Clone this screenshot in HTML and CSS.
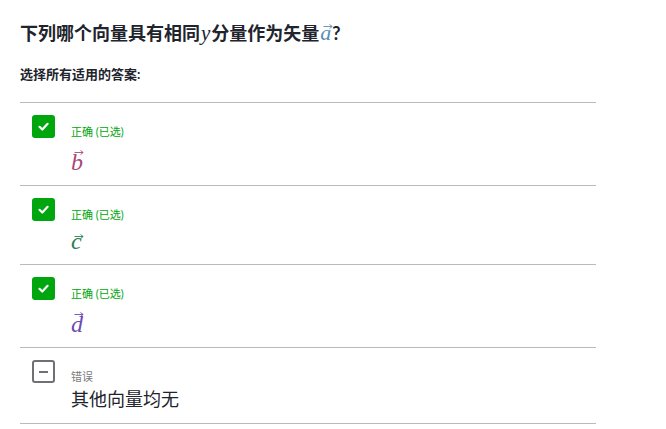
FILE: index.html
```html
<!DOCTYPE html>
<html lang="zh">
<head>
<meta charset="utf-8">
<link rel="stylesheet" href="styles.css">
</head>
<body>
<div class="page">
  <h1 class="title">下列哪个向量具有相同<span class="mi">y</span>分量作为矢量<span class="vec vec-short col-a">a<svg class="arrow" viewBox="0 0 10 5"><path d="M0.5 2.5H9M6.5 0.5L9.2 2.5L6.5 4.5" fill="none" stroke="currentColor" stroke-width="0.9"/></svg></span>?</h1>
  <div class="subtitle">选择所有适用的答案:</div>
  <ul class="choices">
    <li class="choice">
      <span class="box box-checked"><svg viewBox="0 0 23 23"><path d="M7.5 11.8L10.3 14.5L15.6 8.8" fill="none" stroke="#fff" stroke-width="2.2" stroke-linecap="round" stroke-linejoin="round"/></svg></span>
      <div class="body">
        <div class="status status-correct">正确 (已选)</div>
        <div class="math math-tall"><span class="vec vec-tall col-b">b<svg class="arrow" viewBox="0 0 10 5"><path d="M0.5 2.5H9M6.5 0.5L9.2 2.5L6.5 4.5" fill="none" stroke="currentColor" stroke-width="0.9"/></svg></span></div>
      </div>
    </li>
    <li class="choice">
      <span class="box box-checked"><svg viewBox="0 0 23 23"><path d="M7.5 11.8L10.3 14.5L15.6 8.8" fill="none" stroke="#fff" stroke-width="2.2" stroke-linecap="round" stroke-linejoin="round"/></svg></span>
      <div class="body">
        <div class="status status-correct">正确 (已选)</div>
        <div class="math math-short"><span class="vec vec-short col-c">c<svg class="arrow" viewBox="0 0 10 5"><path d="M0.5 2.5H9M6.5 0.5L9.2 2.5L6.5 4.5" fill="none" stroke="currentColor" stroke-width="0.9"/></svg></span></div>
      </div>
    </li>
    <li class="choice">
      <span class="box box-checked"><svg viewBox="0 0 23 23"><path d="M7.5 11.8L10.3 14.5L15.6 8.8" fill="none" stroke="#fff" stroke-width="2.2" stroke-linecap="round" stroke-linejoin="round"/></svg></span>
      <div class="body">
        <div class="status status-correct">正确 (已选)</div>
        <div class="math math-tall"><span class="vec vec-tall col-d">d<svg class="arrow" viewBox="0 0 10 5"><path d="M0.5 2.5H9M6.5 0.5L9.2 2.5L6.5 4.5" fill="none" stroke="currentColor" stroke-width="0.9"/></svg></span></div>
      </div>
    </li>
    <li class="choice">
      <span class="box box-wrong"><span class="minus"></span></span>
      <div class="body">
        <div class="status status-wrong">错误</div>
        <div class="answer-text">其他向量均无</div>
      </div>
    </li>
  </ul>
</div>
</body>
</html>
```

FILE: styles.css
```css
* { box-sizing: border-box; }
html, body { margin: 0; padding: 0; background: #fff; }
body {
  font-family: "Lato", "Noto Sans CJK SC", "Noto Sans", sans-serif;
  color: #21242c;
}
.page {
  padding: 21px 0 0 20px;
  width: 596px;
}
.title {
  margin: 0;
  font-size: 18px;
  line-height: 24px;
  font-weight: 700;
}
.mi {
  font-family: "Liberation Serif", serif;
  font-style: italic;
  font-weight: 400;
  font-size: 21px;
  margin: 0 1px;
}
.subtitle {
  margin-top: 20px;
  font-size: 13px;
  line-height: 18px;
  font-weight: 700;
}
.choices {
  list-style: none;
  margin: 19px 0 0;
  padding: 0;
  border-top: 1px solid #bababe;
}
.choice {
  display: flex;
  gap: 16px;
  padding: 12px 0 13px 12px;
  border-bottom: 1px solid #bababe;
}
.box {
  flex: none;
  width: 23px;
  height: 23px;
  border-radius: 3px;
  display: flex;
  align-items: center;
  justify-content: center;
}
.box svg { width: 23px; height: 23px; display: block; }
.box-checked { background: #00a60e; }
.box-wrong {
  border: 2px solid #6f6f76;
}
.minus {
  width: 9px;
  height: 2px;
  background: #6f6f76;
}
.body {
  padding-top: 9px;
  display: flex;
  flex-direction: column;
}
.status {
  font-size: 11px;
  line-height: 16px;
}
.status-correct { color: #00a60e; }
.status-wrong { color: #7a7a80; }
.math {
  font-family: "Liberation Serif", serif;
  font-style: italic;
  font-size: 24px;
  line-height: 20px;
}
.math-tall { padding-top: 12px; }
.math-short { padding-top: 8px; }
.vec {
  position: relative;
  display: inline-block;
  font-family: "Liberation Serif", serif;
  font-style: italic;
  font-weight: 400;
}
.title .vec {
  font-size: 22px;
  line-height: 20px;
  margin: 0 1px;
}
.arrow {
  position: absolute;
  left: 3px;
  width: 10px;
  height: 5px;
  overflow: visible;
}
.vec-tall .arrow { top: -2px; }
.vec-short .arrow { top: 3px; }
.title .vec .arrow { top: 1px; left: 3px; }
.col-a { color: #5b8db3; }
.col-b { color: #a9487a; }
.col-c { color: #2e7d5b; }
.col-d { color: #6b4bb0; }
.answer-text {
  margin-top: 3px;
  font-size: 18px;
  line-height: 22px;
}
```
